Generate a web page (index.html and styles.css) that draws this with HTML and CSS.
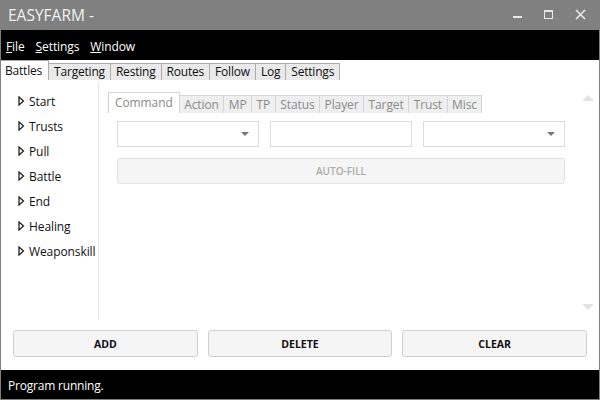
FILE: index.html
```html
<!DOCTYPE html>
<html>
<head>
<meta charset="utf-8">
<link rel="stylesheet" href="styles.css">
</head>
<body>
<div class="window">
  <div class="titlebar">
    <span class="title">EASYFARM -</span>
    <div class="controls">
      <svg class="ctl" width="30" height="30" viewBox="0 0 30 30"><rect x="11" y="16" width="9" height="2" fill="#e8e8e8"/></svg>
      <svg class="ctl" width="30" height="30" viewBox="0 0 30 30"><rect x="10.5" y="10.5" width="8" height="8" fill="none" stroke="#e8e8e8"/><rect x="10" y="10" width="9" height="2" fill="#e8e8e8"/></svg>
      <svg class="ctl" width="30" height="30" viewBox="0 0 30 30"><path d="M10 10 L19 19 M19 10 L10 19" stroke="#e8e8e8" stroke-width="1.6"/></svg>
    </div>
  </div>
  <div class="menubar">
    <span class="menu"><u>F</u>ile</span>
    <span class="menu"><u>S</u>ettings</span>
    <span class="menu"><u>W</u>indow</span>
  </div>
  <div class="maintabs">
    <span class="mtab active">Battles</span>
    <span class="mtab">Targeting</span>
    <span class="mtab">Resting</span>
    <span class="mtab">Routes</span>
    <span class="mtab">Follow</span>
    <span class="mtab">Log</span>
    <span class="mtab">Settings</span>
  </div>
  <div class="content">
    <div class="main">
      <div class="tree">
        <div class="node"><svg class="tri" width="7" height="10" viewBox="0 0 7 10"><path d="M1 1 L5.5 5 L1 9 Z" fill="none" stroke="#222" stroke-width="1.3"/></svg>Start</div>
        <div class="node"><svg class="tri" width="7" height="10" viewBox="0 0 7 10"><path d="M1 1 L5.5 5 L1 9 Z" fill="none" stroke="#222" stroke-width="1.3"/></svg>Trusts</div>
        <div class="node"><svg class="tri" width="7" height="10" viewBox="0 0 7 10"><path d="M1 1 L5.5 5 L1 9 Z" fill="none" stroke="#222" stroke-width="1.3"/></svg>Pull</div>
        <div class="node"><svg class="tri" width="7" height="10" viewBox="0 0 7 10"><path d="M1 1 L5.5 5 L1 9 Z" fill="none" stroke="#222" stroke-width="1.3"/></svg>Battle</div>
        <div class="node"><svg class="tri" width="7" height="10" viewBox="0 0 7 10"><path d="M1 1 L5.5 5 L1 9 Z" fill="none" stroke="#222" stroke-width="1.3"/></svg>End</div>
        <div class="node"><svg class="tri" width="7" height="10" viewBox="0 0 7 10"><path d="M1 1 L5.5 5 L1 9 Z" fill="none" stroke="#222" stroke-width="1.3"/></svg>Healing</div>
        <div class="node"><svg class="tri" width="7" height="10" viewBox="0 0 7 10"><path d="M1 1 L5.5 5 L1 9 Z" fill="none" stroke="#222" stroke-width="1.3"/></svg>Weaponskill</div>
      </div>
      <div class="panel">
        <div class="editor">
          <div class="subtabs">
            <span class="stab active">Command</span>
            <span class="stab">Action</span>
            <span class="stab">MP</span>
            <span class="stab">TP</span>
            <span class="stab">Status</span>
            <span class="stab">Player</span>
            <span class="stab">Target</span>
            <span class="stab">Trust</span>
            <span class="stab">Misc</span>
          </div>
          <div class="fields">
            <div class="field combo"><svg width="8" height="5" viewBox="0 0 8 5"><path d="M0 0 L8 0 L4 4 Z" fill="#777"/></svg></div>
            <div class="field"></div>
            <div class="field combo"><svg width="8" height="5" viewBox="0 0 8 5"><path d="M0 0 L8 0 L4 4 Z" fill="#777"/></svg></div>
          </div>
          <div class="autofill">AUTO-FILL</div>
        </div>
        <div class="scrollbar">
          <svg width="14" height="8" viewBox="0 0 14 8"><path d="M1 7 L7 1 L13 7 Z" fill="#e2e2e2"/></svg>
          <svg width="14" height="8" viewBox="0 0 14 8"><path d="M1 1 L13 1 L7 7 Z" fill="#e2e2e2"/></svg>
        </div>
      </div>
    </div>
    <div class="buttons">
      <div class="btn">ADD</div>
      <div class="btn">DELETE</div>
      <div class="btn">CLEAR</div>
    </div>
  </div>
  <div class="status">Program running.</div>
</div>
</body>
</html>
```

FILE: styles.css
```css
html, body {
  margin: 0;
  padding: 0;
}
body {
  width: 600px;
  height: 400px;
  overflow: hidden;
  font-family: "Open Sans", "Noto Sans", sans-serif;
}
.window {
  width: 600px;
  height: 400px;
  box-sizing: border-box;
  background: #808080;
  padding: 0 1px 1px 1px;
  display: flex;
  flex-direction: column;
}
.titlebar {
  height: 30px;
  display: flex;
  align-items: center;
  justify-content: space-between;
  margin: 0 -1px;
}
.title {
  color: #f2f2f2;
  font-size: 15.5px;
  padding-left: 8px;
}
.controls {
  display: flex;
  gap: 2px;
  padding-right: 4px;
}
.ctl {
  display: block;
}
.menubar {
  height: 30px;
  background: #000;
  display: flex;
  align-items: center;
  padding-left: 5px;
  gap: 11px;
  color: #fff;
  font-size: 12px;
  letter-spacing: -0.1px;
}
.menu {
  padding-top: 2px;
}
.menu u {
  text-underline-offset: 1px;
}
.maintabs {
  height: 20px;
  background: #fff;
  display: flex;
  align-items: flex-end;
  font-size: 12px;
  letter-spacing: -0.2px;
}
.mtab {
  height: 17px;
  box-sizing: border-box;
  border: 1px solid #acacac;
  border-bottom: none;
  border-left: none;
  background: #eaeaea;
  padding: 0 5px;
  line-height: 16px;
  color: #111;
}
.mtab.active {
  height: 20px;
  background: #fff;
  padding: 1px 6px 0 4px;
  line-height: 18px;
}
.content {
  flex: 1;
  background: #fff;
  display: flex;
  flex-direction: column;
}
.main {
  height: 238px;
  margin-top: 2px;
  display: flex;
}
.tree {
  width: 97px;
  border-right: 1px solid #e6e6e6;
  padding-top: 10px;
  display: flex;
  flex-direction: column;
  gap: 7px;
}
.node {
  height: 18px;
  display: flex;
  align-items: center;
  padding-left: 17px;
  gap: 4px;
  font-size: 12px;
  letter-spacing: -0.1px;
  color: #111;
}
.tri {
  display: block;
}
.panel {
  flex: 1;
  display: flex;
  padding-left: 9px;
}
.editor {
  width: 458px;
  padding-top: 10px;
}
.subtabs {
  display: flex;
  align-items: flex-end;
  height: 21px;
  font-size: 12px;
  letter-spacing: -0.1px;
}
.stab {
  height: 18px;
  box-sizing: border-box;
  border: 1px solid #d6d6d6;
  border-bottom: none;
  border-left: none;
  background: #efefef;
  color: #8a8a8a;
  padding: 0 4.5px;
  line-height: 17px;
}
.stab.active {
  height: 21px;
  background: #fff;
  border-left: 1px solid #cfcfcf;
  padding: 1px 6px 0 6px;
  line-height: 18px;
}
.fields {
  display: flex;
  gap: 11px;
  margin-top: 8px;
  padding-left: 9px;
}
.field {
  width: 142px;
  height: 26px;
  box-sizing: border-box;
  border: 1px solid #dcdcdc;
  background: #fff;
  display: flex;
  align-items: center;
  justify-content: flex-end;
  padding-right: 9px;
}
.field svg {
  display: block;
}
.autofill {
  margin: 11px 0 0 9px;
  width: 448px;
  height: 26px;
  box-sizing: border-box;
  border: 1px solid #e2e2e2;
  border-radius: 3px;
  background: #f5f5f5;
  color: #ababab;
  font-size: 10px;
  font-weight: 600;
  display: flex;
  align-items: center;
  justify-content: center;
}
.scrollbar {
  width: 20px;
  margin-left: 12px;
  display: flex;
  flex-direction: column;
  justify-content: space-between;
  align-items: center;
  padding: 12px 0 9px 0;
}
.scrollbar svg {
  display: block;
}
.buttons {
  display: flex;
  gap: 10px;
  padding: 0 12px;
  margin-top: 10px;
}
.btn {
  flex: 1;
  height: 27px;
  box-sizing: border-box;
  border: 1px solid #cfcfcf;
  border-radius: 3px;
  background: #f5f5f5;
  color: #111;
  font-size: 10.5px;
  font-weight: 700;
  display: flex;
  align-items: center;
  justify-content: center;
}
.status {
  height: 29px;
  background: #000;
  color: #fff;
  font-size: 12px;
  letter-spacing: -0.2px;
  display: flex;
  align-items: center;
  padding-left: 7px;
  padding-top: 2px;
  box-sizing: border-box;
}
```
